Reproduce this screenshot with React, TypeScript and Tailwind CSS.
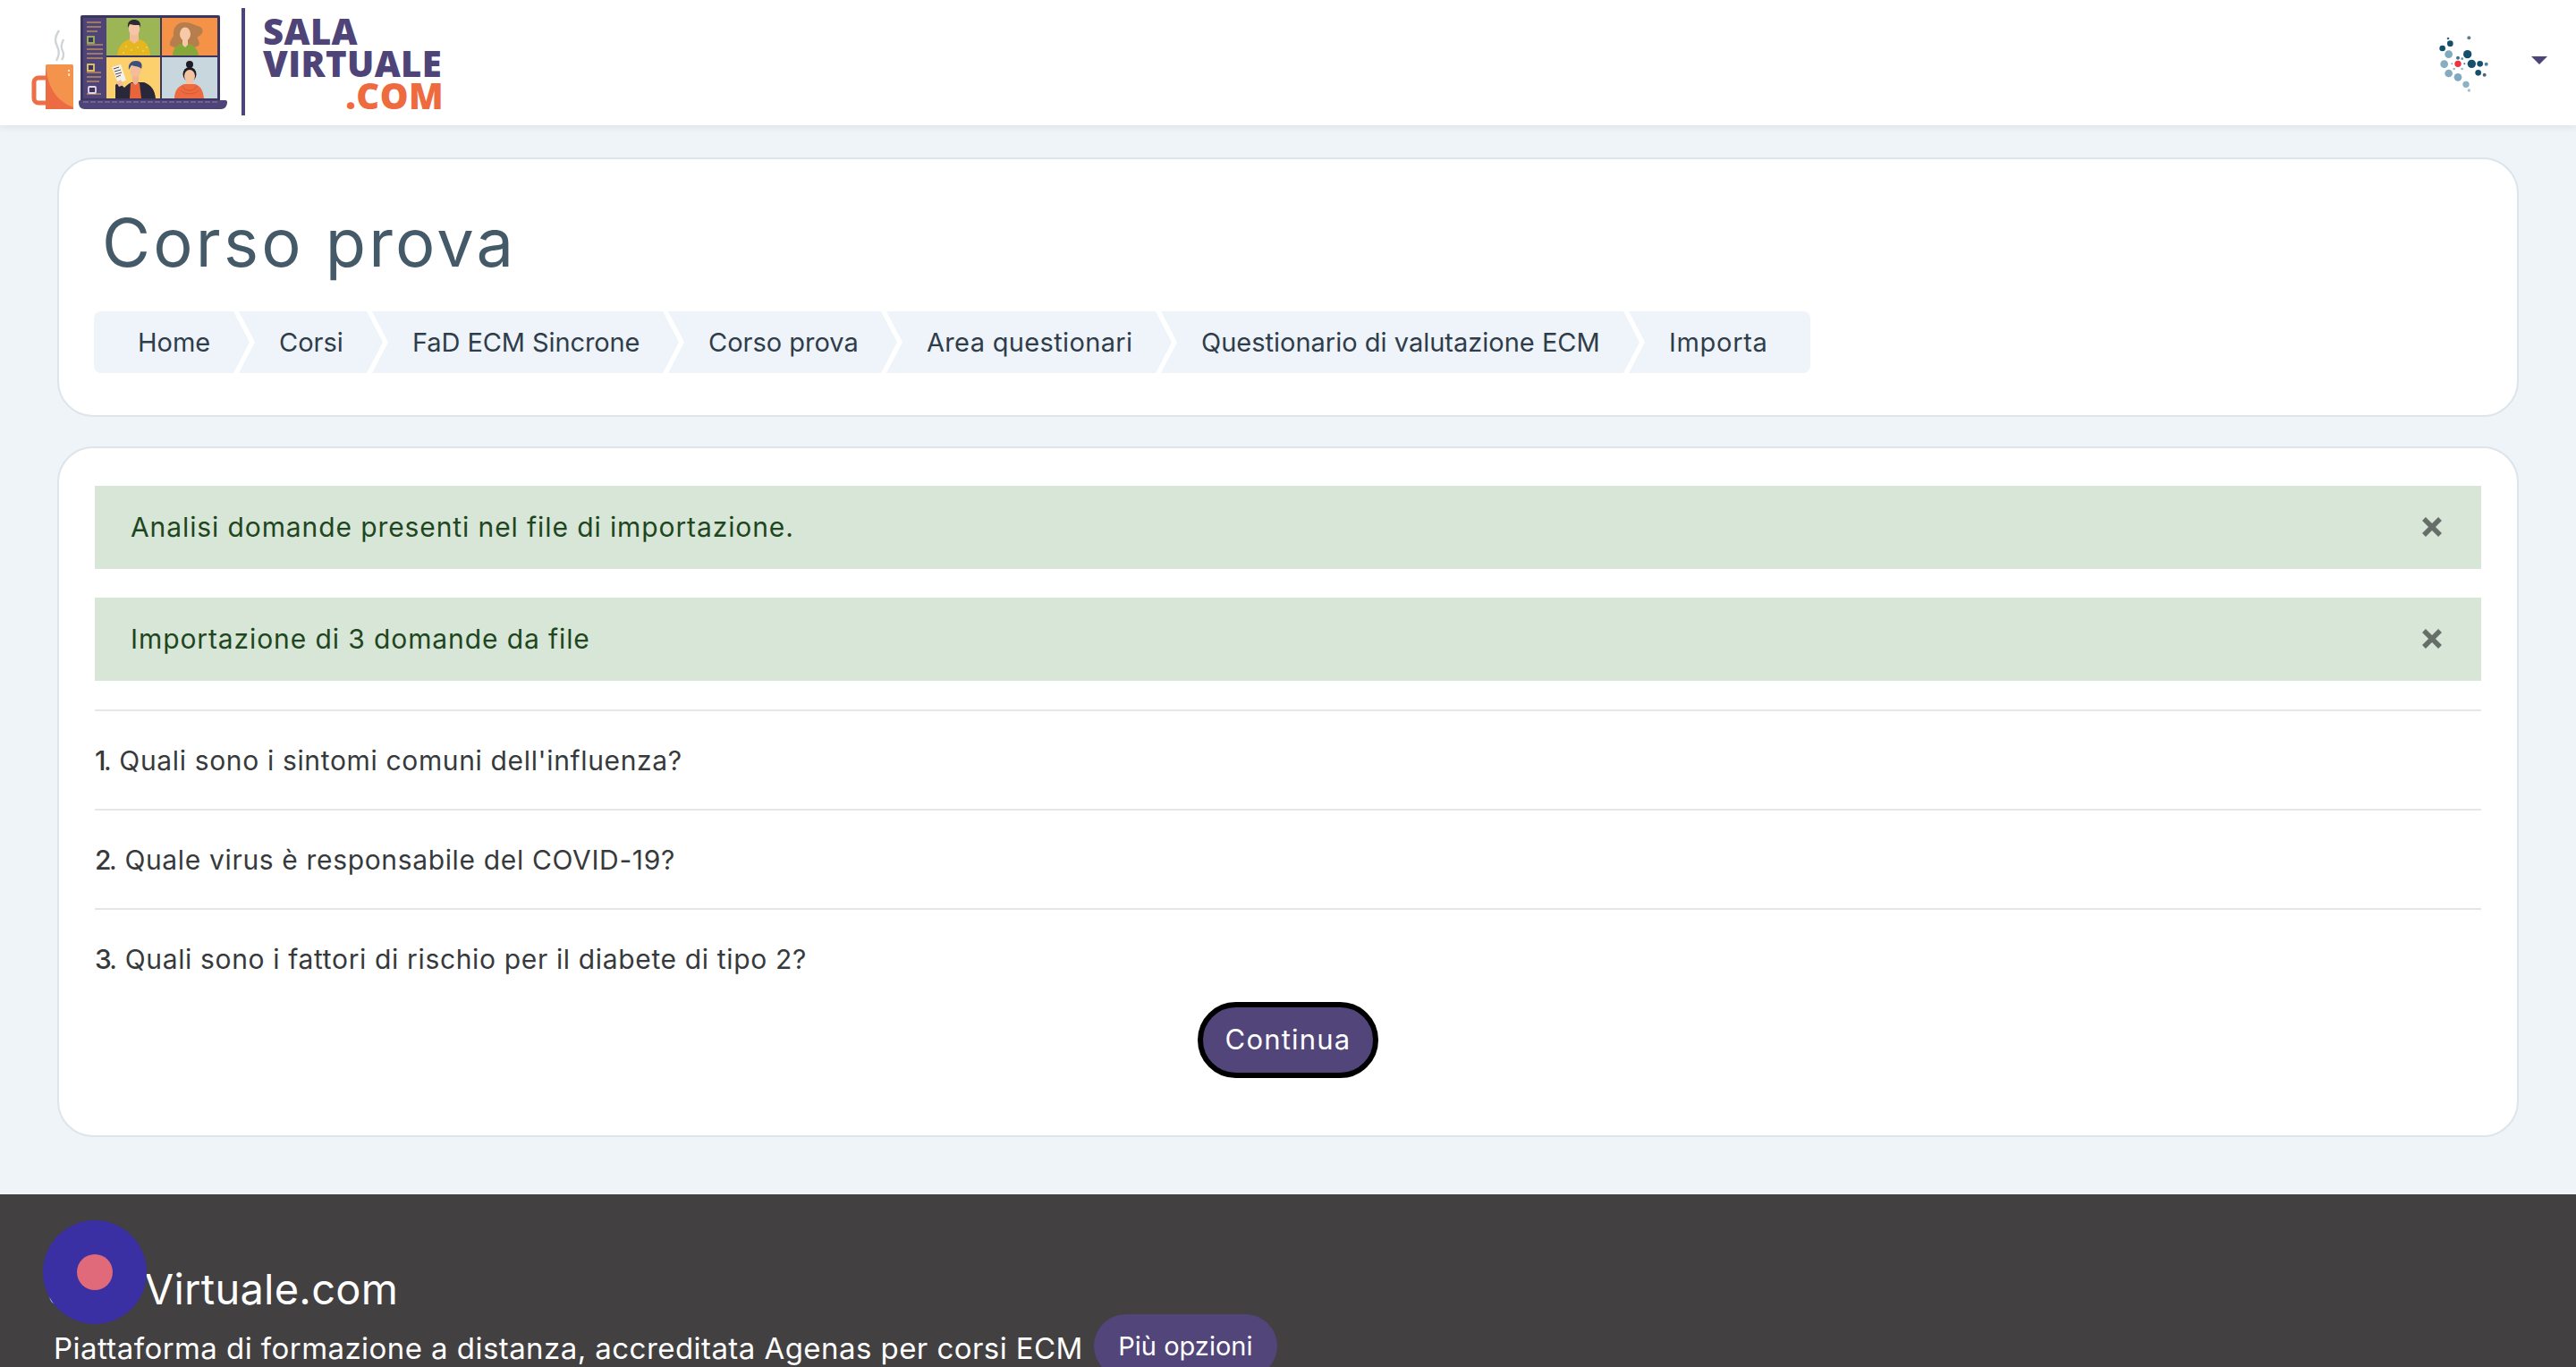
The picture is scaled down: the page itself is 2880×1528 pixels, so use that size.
import React from "react";

function Logo() {
  return (
    <svg width="284" height="140" viewBox="0 0 284 140" className="shrink-0 blur-[0.4px]">
      {/* steam */}
      <path d="M66 34c-5 8-5 12-2 18s2 10-1 16M71 44c-3 6-3 9-1 13s1 7-1 10" fill="none" stroke="#cfd4d6" strokeWidth="2.4" />
      {/* mug */}
      <path d="M51 87H43a5 5 0 0 0-5 5v18a5 5 0 0 0 5 5h8" fill="none" stroke="#ec6f47" strokeWidth="5" />
      <rect x="51" y="72" width="31" height="50" rx="1.5" fill="#f4934c" />
      <path d="M51 73c2 24 12 40 31 47v2H51z" fill="#ec6b42" />
      <circle cx="77" cy="79" r="1.1" fill="#fff" />
      <rect x="76.4" y="82" width="1.4" height="3" fill="#fff" />
      {/* laptop */}
      <rect x="90" y="17" width="156" height="97" rx="2" fill="#3c3560" />
      <rect x="93" y="20" width="26" height="90" fill="#4f4478" />
      <rect x="119" y="20" width="60" height="42" fill="#9cb655" />
      <rect x="181" y="20" width="62" height="42" fill="#f49347" />
      <rect x="119" y="64" width="60" height="46" fill="#fdd06e" />
      <rect x="181" y="64" width="62" height="46" fill="#c8d7de" />
      {/* sidebar */}
      <g stroke="#b98a5c" strokeWidth="1.4">
        <path d="M97 25h16M97 30h16M97 35h12M97 50h18M97 55h18M97 60h18M97 65h18M97 81h16M97 86h16M97 91h14M97 105h16" />
      </g>
      <rect x="98" y="41" width="7" height="7" fill="#3c3560" stroke="#9cb655" strokeWidth="1.8" />
      <rect x="98" y="72" width="7" height="7" fill="#3c3560" stroke="#e8c860" strokeWidth="1.8" />
      <rect x="99" y="97" width="8" height="7" rx="1" fill="#3c3560" stroke="#e5d6e8" strokeWidth="1.8" />
      {/* person 1 */}
      <path d="M131 62c1-10 6-16 14-18h11c8 2 11 8 12 18z" fill="#e4b61f" />
      <path d="M145 36h10v9l-5 4-5-4z" fill="#f2bd98" />
      <ellipse cx="150" cy="32" rx="6.2" ry="7.5" fill="#f5c6a5" />
      <path d="M143 31c-1-7 3-9 7-9s8 2 7 9l-1-3c-4 0-8 0-11-1z" fill="#2d2a33" />
      <g fill="#f5e38c">
        <circle cx="141" cy="52" r="0.8" /><circle cx="147" cy="56" r="0.8" /><circle cx="154" cy="53" r="0.8" /><circle cx="160" cy="57" r="0.8" /><circle cx="164" cy="53" r="0.8" /><circle cx="138" cy="59" r="0.8" />
      </g>
      {/* person 2 */}
      <g transform="translate(-6 0)">
        <path d="M212 25c-9 0-13 7-12 15-4 6-6 10-2 12 6 3 26 2 30-1 3-3-2-7-1-10 8-3 7-11 0-12-4-1-7-4-15-4z" fill="#b67e4c" />
        <ellipse cx="213" cy="38" rx="6" ry="7.5" fill="#f7c9a8" />
        <path d="M199 62c0-7 4-12 10-13h8c6 1 10 6 11 13z" fill="#86a83b" />
        <path d="M210 44h6v6l-3 3-3-3z" fill="#f7c9a8" />
      </g>
      {/* person 3 */}
      <g transform="translate(-7 -1)">
        <path d="M136 96l0 15h45c-1-10-5-15-13-18h-14c-4 2-6 4-8 6l-6-6z" fill="#28283a" />
        <path d="M153 94h10l2 17h-13z" fill="#e8653b" />
        <path d="M155 84h7v9l-3.5 3-3.5-3z" fill="#eeb38f" />
        <ellipse cx="158.5" cy="80" rx="6" ry="7" fill="#f3bd9a" />
        <path d="M151 79c-1-7 3-10 8-10s8 3 6 9c-2-3-8-3-11-4z" fill="#3d4e80" />
      </g>
      <path d="M125 75l10-3 6 18-9 3z" fill="#f6f1e6" />
      <path d="M127 77l6-2M128 80l7-2M129 83l7-2M130 86l5-2" stroke="#4b4b58" strokeWidth="1" />
      <path d="M130 92l5-3 3 6-5 2z" fill="#f3bd9a" />
      {/* person 4 */}
      <g transform="translate(-4 1)">
        <circle cx="216" cy="71" r="4" fill="#1d1b25" />
        <ellipse cx="216" cy="82" rx="7.5" ry="8" fill="#1d1b25" />
        <ellipse cx="216" cy="84" rx="6" ry="7" fill="#f4c3a0" />
        <path d="M212 90h8v6h-8z" fill="#f4c3a0" />
        <path d="M199 109c0-9 5-15 12-16h10c7 1 10 7 11 16z" fill="#ed6b40" />
        <path d="M208 95c2 7 14 7 16 0M206 100c4 5 16 5 20 0" fill="none" stroke="#d9582f" strokeWidth="1" />
      </g>
      {/* base */}
      <path d="M90 112h162a2 2 0 0 1 2 2c0 5-3 8-7 8H95c-5 0-7-3-7-8a2 2 0 0 1 2-2z" fill="#4f4478" />
      <path d="M93 114h150" stroke="#8a82a8" strokeWidth="1" strokeDasharray="6 2" />
      {/* divider */}
      <rect x="270" y="9" width="4" height="120" fill="#4f4478" />
    </svg>
  );
}

const dots: [number, number, number, string][] = [
  [175, 130, 4, "#43606f"], [245, 128, 6, "#5f7f8f"], [182, 147, 10, "#14506c"], [156, 163, 10, "#14506c"],
  [177, 183, 13, "#7fabc1"], [240, 183, 14, "#14506c"], [208, 195, 6, "#3b7590"], [162, 216, 13, "#86adc2"],
  [254, 215, 14, "#14506c"], [282, 215, 10, "#14506c"], [303, 216, 6, "#4f8299"], [177, 247, 13, "#84abc0"],
  [208, 260, 13, "#7fa9c0"], [276, 245, 10, "#14506c"], [297, 252, 6, "#47687a"], [235, 284, 11, "#8db2c6"],
  [245, 304, 5, "#a3bfcd"], [188, 215, 3, "#7fa9c0"], [230, 215, 3, "#3b7590"], [195, 232, 4, "#9cbccc"],
  [222, 232, 4, "#9cbccc"], [222, 198, 4, "#5f93aa"], [208, 215, 11, "#f0323f"],
];

function Avatar() {
  return (
    <svg width="70" height="90" viewBox="130 115 210 270" className="shrink-0 mt-[26px] blur-[0.5px]">
      {dots.map(([x, y, r, c], i) => (
        <circle key={i} cx={x} cy={y} r={r} fill={c} />
      ))}
    </svg>
  );
}

function Close() {
  return (
    <svg width="24" height="24" viewBox="0 0 24 24" className="shrink-0 mb-[2px]">
      <path d="M3 3l18 18M21 3L3 21" stroke="#676d68" strokeWidth="5.5" />
    </svg>
  );
}

const crumbClass = "h-[69px] flex items-center bg-[#eef4fa] text-[#2f3d4a] text-[29px] whitespace-nowrap shrink-0";
const mid = "-ml-[12px] pl-[45px] [clip-path:polygon(0_0,calc(100%-18px)_0,100%_50%,calc(100%-18px)_100%,0_100%,18px_50%)]";

export default function App() {
  return (
    <div className="relative h-[1528px] overflow-hidden bg-[#eff4f9] font-[Inter,sans-serif]">
      <header className="relative z-10 h-[140px] bg-white shadow-[0_2px_8px_rgba(0,0,0,0.08)] flex items-center">
        <Logo />
        <div className="ml-[10px] mt-[2px] flex flex-col items-start font-['Open_Sans',sans-serif] font-extrabold text-[40px] leading-[36px] text-[#4f4478] w-[202px] tracking-[0.4px]">
          <span>SALA</span>
          <span>VIRTUALE</span>
          <span className="self-end text-[#ee6a3f]">.COM</span>
        </div>
        <div className="ml-auto flex items-center">
          <Avatar />
          <span className="ml-[38px] mr-[32px] mb-[6px] w-0 h-0 border-x-[9px] border-x-transparent border-t-[9px] border-t-[#4f4478]" />
        </div>
      </header>

      <main className="px-[64px] pt-[36px]">
        <section className="bg-white border-2 border-[#dde4ea] rounded-[40px] px-[39px] pt-[49px] pb-[47px]">
          <h1 className="ml-[9px] text-[74px] leading-[88px] text-[#455a68] tracking-[3.2px] font-normal">Corso prova</h1>
          <nav className="mt-[33px] flex">
            <a className={`${crumbClass} w-[174px] pl-[49px] rounded-l-[8px] [clip-path:polygon(0_0,calc(100%-18px)_0,100%_50%,calc(100%-18px)_100%,0_100%)]`}>Home</a>
            <a className={`${crumbClass} ${mid} w-[161px]`}>Corsi</a>
            <a className={`${crumbClass} ${mid} w-[343px] tracking-[-0.1px]`}>FaD ECM Sincrone</a>
            <a className={`${crumbClass} ${mid} w-[256px]`}>Corso prova</a>
            <a className={`${crumbClass} ${mid} w-[319px] tracking-[0.34px]`}>Area questionari</a>
            <a className={`${crumbClass} ${mid} w-[535px]`}>Questionario di valutazione ECM</a>
            <a className={`${crumbClass} -ml-[12px] pl-[45px] w-[203px] tracking-[0.7px] rounded-r-[8px] [clip-path:polygon(0_0,100%_0,100%_100%,0_100%,18px_50%)]`}>Importa</a>
          </nav>
        </section>

        <section className="mt-[33px] bg-white border-2 border-[#dde4ea] rounded-[40px] px-[40px] pt-[42px] pb-[64px] text-[30px] text-[#373a3c]">
          {["Analisi domande presenti nel file di importazione.", "Importazione di 3 domande da file"].map((t) => (
            <div key={t} className="h-[93px] mb-[32px] pl-[40px] pr-[43px] bg-[#d8e6d8] text-[#1e4620] flex items-center justify-between tracking-[0.9px]">
              <span>{t}</span>
              <Close />
            </div>
          ))}
          {[
            ["1", "Quali sono i sintomi comuni dell'influenza?", "pb-[37px]", "mr-[-1px]"],
            ["2", "Quale virus è responsabile del COVID-19?", "pb-[37px]", "mr-[-1px]"],
            ["3", "Quali sono i fattori di rischio per il diabete di tipo 2?", "pb-[31px]", "mr-[-1px]"],
          ].map(([n, t, pb, gap]) => (
            <div key={n} className={`border-t-2 border-[#e4e7ea] pt-[38px] leading-[34px] tracking-[0.65px] ${pb}`}>
              <b className="font-medium tracking-[-2.5px]">{n}</b><span className={gap}>. </span>{t}
            </div>
          ))}
          <div className="flex justify-center">
            <button className="w-[202px] h-[85px] rounded-full border-[6px] border-black bg-[#51457a] text-white text-[31px] tracking-[1.2px]">Continua</button>
          </div>
        </section>
      </main>

      <footer className="mt-[64px] h-[400px] bg-[#434041] text-white pl-[53px] pt-[74px]">
        <div className="text-[47px] leading-[64px] tracking-[0.25px]">Sala Virtuale.com</div>
        <div className="flex items-start mt-[-4px] ml-[7px]">
          <span className="text-[33px] leading-[56px] mt-[10px] tracking-[0.44px]">Piattaforma di formazione a distanza, accreditata Agenas per corsi ECM</span>
          <a className="ml-[12px] h-[71px] w-[205px] rounded-[36px] bg-[#51457a] flex items-center justify-center text-[29px]">Più opzioni</a>
        </div>
      </footer>

      <div className="absolute left-[48px] top-[1364px] w-[116px] h-[116px] rounded-full bg-[#3a2fa3] flex items-center justify-center">
        <div className="w-[40px] h-[40px] rounded-full bg-[#e06a7a]" />
      </div>
    </div>
  );
}
